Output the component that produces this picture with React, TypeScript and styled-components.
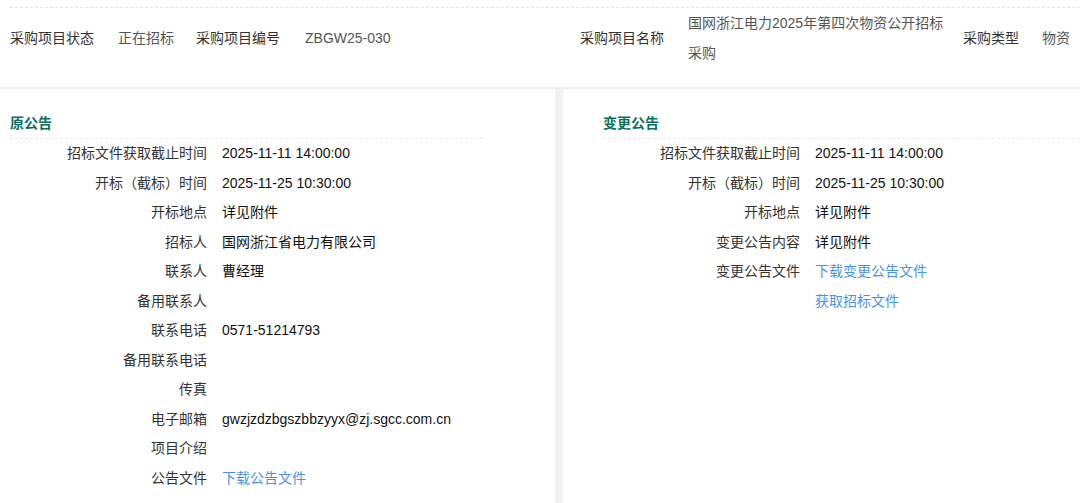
import React from 'react';
import styled, { createGlobalStyle } from 'styled-components';

const GlobalStyle = createGlobalStyle`
  html, body {
    margin: 0;
    padding: 0;
    background: #fff;
    overflow: hidden;
  }
  body {
    font-family: "Liberation Sans", Arial, "Noto Sans CJK SC", sans-serif;
    font-size: 14px;
    color: #333;
  }
`;

const Page = styled.div`
  width: 1080px;
  height: 503px;
  display: flex;
  flex-direction: column;
  overflow: hidden;
`;

const DashedRule = styled.div<{ $inset?: number }>`
  margin-left: ${(p) => p.$inset ?? 0}px;
  border-top: 1px dashed #e6e6e6;
`;

const TopRule = styled(DashedRule)`
  margin-top: 7px;
`;

const Summary = styled.div`
  display: grid;
  grid-template-columns: 108px 78px 109px 275px 108px 275px 79px auto;
  align-items: center;
  padding: 0 0 19px 10px;
  border-bottom: 2px solid #efefef;
  white-space: nowrap;
`;

const SummaryLabel = styled.div`
  color: #333;
  line-height: 30px;
`;

const SummaryValue = styled.div<{ $wrap?: boolean }>`
  color: #555;
  line-height: 30px;
  white-space: ${(p) => (p.$wrap ? 'normal' : 'nowrap')};
  padding-right: ${(p) => (p.$wrap ? '12px' : '0')};
`;

const Panels = styled.div`
  flex: 1;
  display: grid;
  grid-template-columns: 555px 1fr;
  column-gap: 8px;
  background: #f2f2f2;
`;

const Panel = styled.section<{ $left: number; $right: number }>`
  background: #fff;
  padding: 24px ${(p) => p.$right}px 0 ${(p) => p.$left}px;
`;

const SectionTitle = styled.h3`
  margin: 0;
  padding-bottom: 5px;
  font-size: 14px;
  line-height: 20px;
  font-weight: bold;
  color: #0b6f60;
  border-bottom: 1px dashed #ececec;
`;

const Fields = styled.div`
  display: grid;
  grid-template-columns: 197px 1fr;
  column-gap: 15px;
  line-height: 29.5px;
`;

const FieldLabel = styled.div`
  text-align: right;
  color: #333;
  white-space: nowrap;
`;

const FieldValue = styled.div`
  color: #111;
  white-space: nowrap;
`;

const FileLink = styled.a`
  color: #4a92e6;
  text-decoration: none;
  cursor: pointer;
`;

type Field = { label: string; value?: string; link?: boolean };

const originalFields: Field[] = [
  { label: '招标文件获取截止时间', value: '2025-11-11 14:00:00' },
  { label: '开标（截标）时间', value: '2025-11-25 10:30:00' },
  { label: '开标地点', value: '详见附件' },
  { label: '招标人', value: '国网浙江省电力有限公司' },
  { label: '联系人', value: '曹经理' },
  { label: '备用联系人' },
  { label: '联系电话', value: '0571-51214793' },
  { label: '备用联系电话' },
  { label: '传真' },
  { label: '电子邮箱', value: 'gwzjzdzbgszbbzyyx@zj.sgcc.com.cn' },
  { label: '项目介绍' },
  { label: '公告文件', value: '下载公告文件', link: true },
];

const changeFields: Field[] = [
  { label: '招标文件获取截止时间', value: '2025-11-11 14:00:00' },
  { label: '开标（截标）时间', value: '2025-11-25 10:30:00' },
  { label: '开标地点', value: '详见附件' },
  { label: '变更公告内容', value: '详见附件' },
  { label: '变更公告文件', value: '下载变更公告文件', link: true },
  { label: '', value: '获取招标文件', link: true },
];

const FieldList: React.FC<{ fields: Field[] }> = ({ fields }) => (
  <Fields>
    {fields.map((f, i) => (
      <React.Fragment key={i}>
        <FieldLabel>{f.label}</FieldLabel>
        <FieldValue>
          {f.link ? <FileLink>{f.value}</FileLink> : f.value}
        </FieldValue>
      </React.Fragment>
    ))}
  </Fields>
);

const LeftSection = styled.div`
  max-width: 473px;
`;

const App: React.FC = () => (
  <Page>
    <GlobalStyle />
    <TopRule $inset={10} />
    <Summary>
      <SummaryLabel>采购项目状态</SummaryLabel>
      <SummaryValue>正在招标</SummaryValue>
      <SummaryLabel>采购项目编号</SummaryLabel>
      <SummaryValue>ZBGW25-030</SummaryValue>
      <SummaryLabel>采购项目名称</SummaryLabel>
      <SummaryValue $wrap>国网浙江电力2025年第四次物资公开招标采购</SummaryValue>
      <SummaryLabel>采购类型</SummaryLabel>
      <SummaryValue>物资</SummaryValue>
    </Summary>
    <Panels>
      <Panel $left={10} $right={0}>
        <LeftSection>
          <SectionTitle>原公告</SectionTitle>
        </LeftSection>
        <FieldList fields={originalFields} />
      </Panel>
      <Panel $left={40} $right={0}>
        <SectionTitle>变更公告</SectionTitle>
        <FieldList fields={changeFields} />
      </Panel>
    </Panels>
  </Page>
);

export default App;
